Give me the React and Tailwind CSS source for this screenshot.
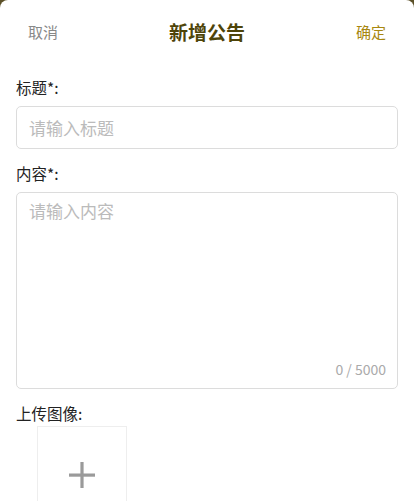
export default function App() {
  const font = { fontFamily: '"Noto Sans CJK SC", "Noto Sans", sans-serif' };
  return (
    <div className="h-[501px] w-[414px] overflow-hidden bg-[#5b5028]" style={font}>
      <div className="h-full rounded-t-[8px] bg-white">
        {/* header */}
        <div className="flex h-16 items-center justify-between px-7">
          <span className="text-[15px] text-[#888]">取消</span>
          <span className="text-[19px] font-bold text-[#4e4409]">新增公告</span>
          <span className="text-[15px] text-[#a8870f]">确定</span>
        </div>

        <div className="flex flex-col px-4 pt-3">
          <label className="mb-2 text-[15.5px] leading-[22px] text-[#222]">标题*:</label>
          <div className="flex h-[43px] items-center rounded-[5px] border border-[#dcdcdc] px-3">
            <span className="text-[17px] text-[#bbb]">请输入标题</span>
          </div>

          <label className="mb-2 mt-[13px] text-[15.5px] leading-[22px] text-[#222]">内容*:</label>
          <div className="flex h-[197px] flex-col justify-between rounded-[5px] border border-[#dcdcdc] pb-[8px] pl-3 pr-[11px] pt-[6px]">
            <span className="text-[17px] leading-6 text-[#bbb]">请输入内容</span>
            <span className="self-end text-[14px] text-[#aaa]">0 / 5000</span>
          </div>

          <label className="mt-[13px] text-[15.5px] leading-[22px] text-[#222]">上传图像:</label>
          <div className="ml-[21px] mt-[2px] flex h-[90px] w-[90px] items-center justify-center border border-[#eeeeee]">
            <svg width="28" height="28" viewBox="0 0 28 28" className="mt-2">
              <rect x="1" y="12.5" width="26" height="3.2" fill="#9a9a9a" />
              <rect x="12.4" y="1" width="3.2" height="26" fill="#9a9a9a" />
            </svg>
          </div>
        </div>
      </div>
    </div>
  );
}
